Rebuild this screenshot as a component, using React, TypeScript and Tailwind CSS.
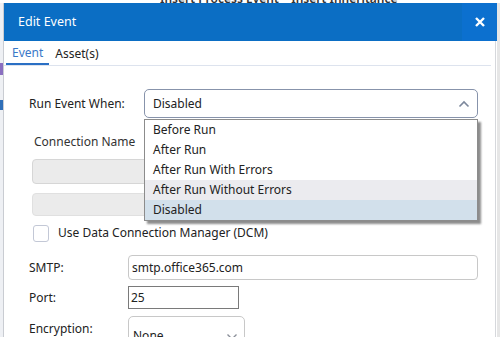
import React from "react";

const font = { fontFamily: '"Noto Sans", "Open Sans", sans-serif' };

function ChevronUp() {
  return (
    <svg width="12" height="8" viewBox="0 0 12 8" className="block">
      <path d="M1.5 6.5 L6 2 L10.5 6.5" fill="none" stroke="#7d889c" strokeWidth="1.6" />
    </svg>
  );
}
function ChevronDown() {
  return (
    <svg width="12" height="8" viewBox="0 0 12 8" className="block">
      <path d="M1.5 1.5 L6 6 L10.5 1.5" fill="none" stroke="#8a8f99" strokeWidth="1.4" />
    </svg>
  );
}

export default function App() {
  const items = ["Before Run", "After Run", "After Run With Errors", "After Run Without Errors", "Disabled"];
  return (
    <div className="w-[500px] h-[337px] bg-white overflow-hidden flex flex-col text-[12px] text-[#222]" style={font}>
      <div className="h-[3px] overflow-hidden relative shrink-0">
        <div className="absolute left-[160px] top-[-10px] text-[12px] font-semibold text-[#333] whitespace-nowrap">
          Insert Process Event &nbsp;&nbsp; Insert Inheritance
        </div>
      </div>
      <div className="flex flex-1 min-h-0">
        <div className="w-[3px] bg-[#eef0f4] flex flex-col shrink-0">
          <div className="h-[60px]" />
          <div className="h-[12px] bg-[#8a6fc0]" />
          <div className="h-[25px]" />
          <div className="h-[10px] bg-[#2f6fb8]" />
        </div>
        <div className="flex-1 flex flex-col border-l border-[#c9ccd2] min-w-0">
          <div className="h-[38px] bg-[#0b6ec4] flex items-center justify-between pl-[14px] shrink-0">
            <span className="text-white text-[12.5px]">Edit Event</span>
            <div className="w-[35px] h-full bg-[#0c70cf] flex items-center justify-center">
              <svg width="10" height="10" viewBox="0 0 10 10">
                <path d="M1 1 L9 9 M9 1 L1 9" stroke="white" strokeWidth="2.4" />
              </svg>
            </div>
          </div>
          <div className="flex-1 flex border-r border-[#d6d8dc] mr-[1px] min-h-0">
            <div className="flex-1 flex flex-col min-w-0">
              <div className="h-[25px] border-b border-[#dde3ee] flex items-end px-[2px] mr-[4px] shrink-0">
                <div className="h-[23px] px-[6px] border-b-2 border-[#2a6fc4] text-[#3a78c8] flex items-center">Event</div>
                <div className="h-[23px] px-[6px] flex items-center">Asset(s)</div>
              </div>
              <div className="flex flex-col pl-[24px] pr-[17px]">
                <div className="flex items-center mt-[23px] relative">
                  <span className="w-[116px] shrink-0 pl-[1px]">Run Event When:</span>
                  <div className="flex-1 h-[29px] border border-[#8793ab] rounded-[5px] flex items-center justify-between pl-[8px] pr-[7px]">
                    <span>Disabled</span>
                    <ChevronUp />
                  </div>
                  <div className="absolute left-[116px] right-0 top-[30px] border border-[#8c8c8c] bg-white shadow-[3px_3px_2px_rgba(0,0,0,0.45)] z-10">
                    {items.map((t, i) => (
                      <div
                        key={t}
                        className={
                          "h-[20px] flex items-center pl-[8px] " +
                          (i === 3 ? "bg-[#ebebef]" : i === 4 ? "bg-[#d2e0eb]" : "")
                        }
                      >
                        {t}
                      </div>
                    ))}
                  </div>
                </div>
                <div className="mt-[15px] pl-[6px] text-[#333]">Connection Name</div>
                <div className="mt-[8px] ml-[4px] h-[25px] bg-[#ebebeb] border border-[#d6d6d6] rounded-[4px]" />
                <div className="mt-[9px] ml-[4px] h-[23px] bg-[#ebebeb] border border-[#e0e0e0] rounded-[4px]" />
                <div className="flex items-center mt-[8px] ml-[5px]">
                  <div className="w-[16px] h-[17px] border border-[#c3c8d6] rounded-[3px] bg-white" />
                  <span className="ml-[9px]">Use Data Connection Manager (DCM)</span>
                </div>
                <div className="flex items-center mt-[13px]">
                  <span className="w-[100px] shrink-0 pl-[1px]">SMTP:</span>
                  <div className="flex-1 h-[25px] border border-[#c8c8c8] rounded-[4px] flex items-center pl-[3px]">
                    smtp.office365.com
                  </div>
                </div>
                <div className="flex items-center mt-[6px]">
                  <span className="w-[100px] shrink-0 pl-[1px]">Port:</span>
                  <div className="w-[111px] h-[23px] border border-[#7a7a7a] flex items-center pl-[2px]">25</div>
                </div>
                <div className="flex items-start mt-[7px]">
                  <span className="w-[100px] shrink-0 pl-[1px] pt-[4px]">Encryption:</span>
                  <div className="w-[117px] h-[28px] border border-[#c8c8c8] rounded-[5px] flex items-end justify-between pl-[4px] pr-[6px]">
                    <span className="leading-[14px]">None</span>
                    <div className="pb-[2px]"><ChevronDown /></div>
                  </div>
                </div>
              </div>
            </div>
          </div>
        </div>
        <div className="w-[3px] bg-[#e6e6e6] shrink-0" />
      </div>
    </div>
  );
}
